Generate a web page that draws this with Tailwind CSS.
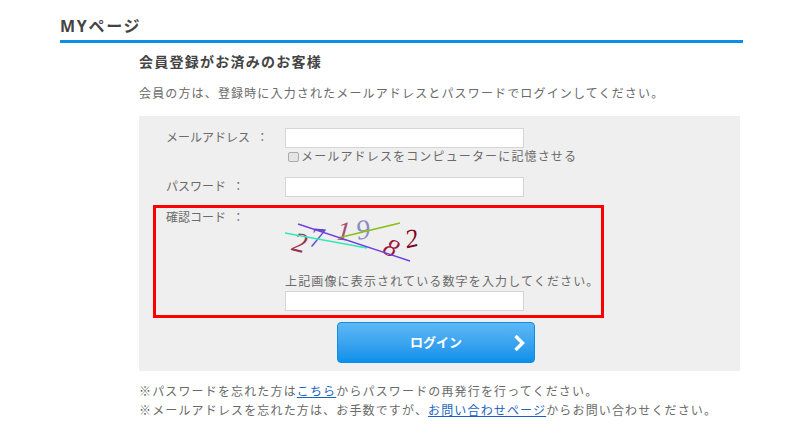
<!DOCTYPE html>
<html lang="ja">
<head>
    <meta charset="UTF-8">
    <title>MYページ</title>
    <script src="https://cdn.jsdelivr.net/npm/@tailwindcss/browser@4"></script>
</head>
<body class="bg-white font-['Open_Sans','Noto_Sans_CJK_JP',sans-serif] text-[#6a6a6a] overflow-hidden">
    <div class="ml-[60px] w-[683px] pt-[14px]">
        <h1 class="h-[26px] text-[16px] leading-[24px] font-bold tracking-[1.7px] text-[#444]">MYページ</h1>
        <div class="h-[3px] bg-[#0d8ee6]"></div>

        <div class="ml-[79px] w-[601px]">
            <h2 class="mt-[9px] text-[14px] leading-[20px] font-bold tracking-[1.25px] text-[#444]">会員登録がお済みのお客様</h2>
            <p class="mt-[12px] text-[12px] leading-[20px] tracking-[1.15px] whitespace-nowrap">会員の方は、登録時に入力されたメールアドレスとパスワードでログインしてください。</p>

            <div class="mt-[12px] h-[255px] bg-[#efefef] pt-[12px]">
                <div class="flex h-[49px]">
                    <div class="w-[146px] pl-[27px] text-[12px] leading-[20px] whitespace-nowrap">メールアドレス&nbsp;&nbsp;：</div>
                    <div>
                        <input type="text" class="block h-[20px] w-[239px] border border-[#d5d5d5] bg-white">
                        <label class="flex items-center h-[18px] text-[12px] tracking-[1.15px] whitespace-nowrap">
                            <span class="ml-[3px] mr-[2px] h-[10px] w-[11px] rounded-[2px] border border-[#aaa] bg-[#e4e4e4]"></span>メールアドレスをコンピューターに記憶させる
                        </label>
                    </div>
                </div>
                <div class="flex h-[29px]">
                    <div class="w-[146px] pl-[27px] text-[12px] leading-[20px] whitespace-nowrap">パスワード&nbsp;&nbsp;：</div>
                    <input type="text" class="block h-[20px] w-[239px] border border-[#d5d5d5] bg-white">
                </div>

                <div class="mt-[-1px] ml-[14px] flex h-[113px] w-[451px] border-3 border-[#ff0000]">
                    <div class="w-[129px] pt-[3px] pl-[10px] text-[12px] leading-[14px] whitespace-nowrap">確認コード&nbsp;&nbsp;：</div>
                    <div>
                        <svg width="150" height="56" viewBox="0 0 150 56" class="block mt-[6px] ml-[-5px]" font-family="'Liberation Serif',serif" font-style="italic">
                            <text x="13" y="38" font-size="28" fill="#a03050" transform="rotate(14 20 28)">2</text>
                            <text x="30" y="33" font-size="28" fill="#5a48c8" transform="rotate(6 37 23)">7</text>
                            <text x="57" y="26" font-size="27" fill="#a85070" transform="rotate(5 63 17)">1</text>
                            <text x="76" y="25" font-size="28" fill="#8c8cc4" transform="rotate(-10 83 16)">9</text>
                            <text x="105" y="42" font-size="26" fill="#a01840" transform="rotate(28 111 33)">8</text>
                            <text x="125" y="33" font-size="26" fill="#800020" transform="rotate(-12 132 24)">2</text>
                            <line x1="5" y1="19" x2="87" y2="34" stroke="#30e8b8" stroke-width="1.4"/>
                            <line x1="58" y1="24" x2="120" y2="9" stroke="#88c010" stroke-width="1.6"/>
                            <line x1="18" y1="10" x2="130" y2="47" stroke="#7040e0" stroke-width="1.4"/>
                        </svg>
                        <p class="mt-[3px] text-[12px] leading-[18px] tracking-[1.15px] whitespace-nowrap">上記画像に表示されている数字を入力してください。</p>
                        <input type="text" class="block h-[20px] w-[239px] border border-[#d5d5d5] bg-white">
                    </div>
                </div>

                <button class="relative ml-[198px] mt-[4px] flex h-[41px] w-[198px] items-center justify-center rounded-[4px] border border-[#0d8ee6] bg-linear-to-b from-[#5cb8f4] to-[#0590ea] text-[13px] font-bold text-white">
                    ログイン
                    <svg width="12" height="18" viewBox="0 0 12 18" class="absolute right-[9px] top-[11px]">
                        <path d="M2.5 2 L9.5 9 L2.5 16" fill="none" stroke="#fff" stroke-width="3.4"/>
                    </svg>
                </button>
            </div>

            <p class="mt-[11px] text-[12px] leading-[19px] tracking-[1.15px] whitespace-nowrap">※パスワードを忘れた方は<a href="#" class="text-[#1a64c0] underline">こちら</a>からパスワードの再発行を行ってください。</p>
            <p class="text-[12px] leading-[19px] tracking-[1.15px] whitespace-nowrap">※メールアドレスを忘れた方は、お手数ですが、<a href="#" class="text-[#1a64c0] underline">お問い合わせページ</a>からお問い合わせください。</p>
        </div>
    </div>
</body>
</html>
